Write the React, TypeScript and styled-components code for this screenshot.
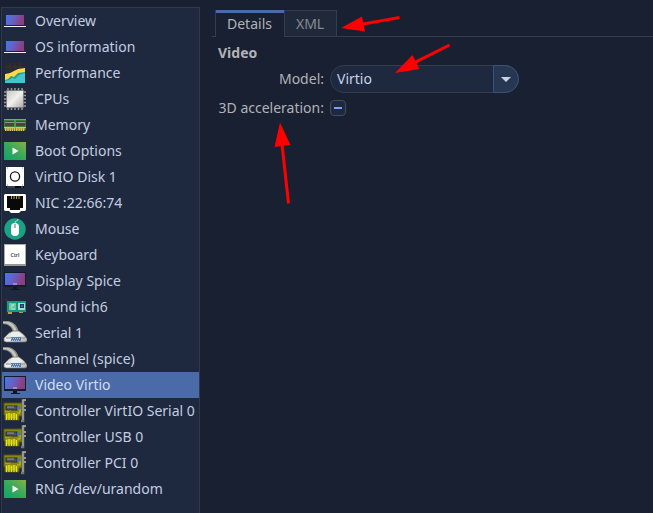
import React, { useEffect, useRef, useState } from "react";
import styled, { createGlobalStyle } from "styled-components";

const GlobalStyle = createGlobalStyle`
  *, *::before, *::after { box-sizing: border-box; }
  body {
    margin: 0;
    background: #182031;
    color: #b1b3b7;
    font-family: "Noto Sans", sans-serif;
    font-size: 14px;
    line-height: 20px;
  }
  button, select { font: inherit; }
`;

const Window = styled.main`
  position: relative;
  display: flex;
  gap: 12px;
  height: 100vh;
  padding: 7px 0 0 1px;
  overflow: hidden;
`;

const Sidebar = styled.nav`
  flex: none;
  width: 199px;
  border: 1px solid #303a4c;
  border-bottom: 0;
  background: #1e283e;
`;

const DeviceList = styled.ul`
  margin: 0;
  padding: 0;
  list-style: none;
`;

const DeviceRow = styled.button<{ $selected: boolean }>`
  display: flex;
  align-items: center;
  gap: 8px;
  width: 100%;
  height: 26px;
  padding: 0 0 0 1px;
  border: 0;
  background: ${(p) => (p.$selected ? "#4a6ba8" : "transparent")};
  color: ${(p) => (p.$selected ? "#d4ddf0" : "#c3cde0")};
  text-align: left;
  white-space: nowrap;
`;

const DeviceIcon = styled.svg`
  flex: none;
  width: 24px;
  height: 24px;
`;

const Details = styled.section`
  flex: 1;
  min-width: 0;
  padding-top: 3px;
`;

const TabBar = styled.div`
  display: flex;
  height: 27px;
  padding-left: 3px;
  box-shadow: inset 0 -1px #353d4c;
`;

const Tab = styled.button<{ $active: boolean }>`
  padding: 0 12px 0 11px;
  border: 1px solid #353d4c;
  border-width: ${(p) => (p.$active ? "0 1px" : "1px 1px 1px 0")};
  background: ${(p) => (p.$active ? "#182031" : "#20293a")};
  box-shadow: ${(p) => (p.$active ? "inset 0 3px #4a6ba8" : "none")};
  color: ${(p) => (p.$active ? "#b1b3b7" : "#858a94")};
`;

const Panel = styled.div`
  padding: 6px;
`;

const Heading = styled.h2`
  margin: 0 0 2px;
  font-size: 14px;
  line-height: 20px;
  font-weight: 700;
`;

const Form = styled.form`
  display: grid;
  grid-template-columns: 106px auto;
  grid-template-rows: 28px 20px;
  justify-content: start;
  align-items: center;
  gap: 5px 6px;
`;

const Label = styled.label`
  text-align: right;
  white-space: nowrap;
`;

const Combo = styled.div`
  position: relative;
  width: 189px;
`;

const Select = styled.select`
  display: block;
  appearance: none;
  width: 100%;
  height: 28px;
  padding: 0 32px 0 6px;
  border: 1px solid #343d4d;
  border-radius: 14px;
  background: #1e283e;
  color: #c8d3e8;
`;

const ComboArrow = styled.span`
  position: absolute;
  top: 0;
  right: 0;
  display: grid;
  place-items: center;
  width: 26px;
  height: 28px;
  border: 1px solid #3b5179;
  border-radius: 0 14px 14px 0;
  background: #273752;
  pointer-events: none;
`;

const Checkbox = styled.input`
  appearance: none;
  display: grid;
  place-items: center;
  width: 16px;
  height: 16px;
  margin: 0;
  border: 1px solid #434c5b;
  border-radius: 4px;
  background: #1e283e;

  &:indeterminate::after {
    content: "";
    width: 8px;
    height: 2px;
    background: #7aa2f7;
  }
  &:checked::after {
    content: "";
    width: 8px;
    height: 8px;
    background: #7aa2f7;
  }
`;

const Annotations = styled.svg`
  position: absolute;
  top: 0;
  left: 0;
  width: 653px;
  height: 513px;
  pointer-events: none;
`;

type IconName =
  | "laptop" | "graph" | "cpu" | "memory" | "play" | "disk" | "nic"
  | "mouse" | "key" | "display" | "sound" | "serial" | "card";

const drawings: Record<IconName, React.ReactNode> = {
  laptop: (
    <>
      <path d="M3 6h18v11H3z" fill="#1b2033" />
      <path d="M3 6h18v10H3z" fill="url(#screen)" />
      <path d="M1 17h22v1H1z" fill="#f4f1ee" />
    </>
  ),
  graph: (
    <>
      <path d="M2 2h20v20H2z" fill="#29292d" />
      <path d="M2 6h20M2 10h20M7 2v12M12 2v12M17 2v12" stroke="#3a3a3f" strokeWidth=".6" />
      <path d="M2 13l5-1 4-2 4-2 7-1v15H2z" fill="#fbd84c" />
      <path d="M2 19l3-1 3-3 3 1 4-4 7-1v11H2z" fill="#26a58c" />
      <path d="M2 20l4-1 3-2 3 1 4-4 6-2v10H2z" fill="#48c4cf" />
    </>
  ),
  cpu: (
    <>
      <path d="M5 1v22M8.5 1v22M12 1v22M15.5 1v22M19 1v22M1 5h22M1 8.5h22M1 12h22M1 15.5h22M1 19h22" stroke="#9c9b97" strokeWidth="1.5" />
      <path d="M3.5 3.5h17v17h-17z" fill="url(#metal)" stroke="#77777a" strokeWidth=".7" />
    </>
  ),
  memory: (
    <>
      <path d="M1 6h22v11H1z" fill="#417b35" />
      <path d="M1 6h22v1H1z" fill="#78a875" />
      <path d="M2 8h9v5H2zM13 8h9v5h-9z" fill="#42483f" />
      <path d="M2 9.5h9M13 9.5h9" stroke="#92968b" />
      <path d="M1 14.5h22" stroke="#b5d36d" />
      <path d="M2 16.5h20" stroke="#e4be50" strokeWidth="3" strokeDasharray="1.6 .6" />
      <path d="M12 7v8" stroke="#47c953" />
    </>
  ),
  play: (
    <>
      <path d="M1 3h22v18H1z" fill="url(#green)" />
      <path d="M9.5 8.5v7l6-3.5z" fill="#fff" />
    </>
  ),
  disk: (
    <>
      <path d="M3 2h18v19H3z" fill="#fff" />
      <path d="M3 21h18v2H3z" fill="#080a0f" />
      <path d="M4 22h8M18 22h2" stroke="#9aa2b0" strokeWidth=".7" />
      <circle cx="12" cy="11.5" r="4.6" fill="none" stroke="#171717" strokeWidth="1.3" />
      <path d="M4 3h1M19 3h1M4 20h1M19 20h1" stroke="#999" />
    </>
  ),
  nic: (
    <>
      <path d="M2 3h20l1 1v15l-1 1h-4l-2 2H8l-2-2H2l-1-1V4z" fill="#fff" />
      <path d="M4 5h16v12h-3v2H7v-2H4z" fill="#090909" />
      <path d="M8.5 5v3M11 5v3M13.5 5v3M16 5v3" stroke="#b89a35" />
    </>
  ),
  mouse: (
    <>
      <circle cx="12" cy="12" r="10.7" fill="#18a383" />
      <path d="M12 6c0-3 3-1 3-4" fill="none" stroke="#d8f1e9" strokeWidth=".8" />
      <rect x="8" y="6" width="8" height="13" rx="4" fill="#fff" />
      <path d="M12 7v4" stroke="#83a99d" strokeWidth="1.5" />
    </>
  ),
  key: (
    <>
      <path d="M1 1h22v22H1z" fill="#aaa" />
      <path d="M2 2h20v19H2z" fill="#fff" />
      <path d="M1 22h22" stroke="#858585" />
      <text x="12" y="14" textAnchor="middle" fill="#555" fontSize="5" fontWeight="700">Ctrl</text>
    </>
  ),
  display: (
    <>
      <path d="M1 3h22v15H1z" fill="#151b2b" />
      <path d="M2 4h20v12H2z" fill="url(#screen)" />
      <path d="M10 15h4" stroke="#cfbce4" />
      <path d="M10 18h4v2h3v1H8v-1h2z" fill="#111622" />
    </>
  ),
  sound: (
    <>
      <path d="M2 4l2 1v15" fill="none" stroke="#30353c" strokeWidth="1.5" />
      <path d="M4 6h19v11H4z" fill="#169983" />
      <path d="M5 17h4v2H5zM16 17h4v1h-4z" fill="#b89c4b" />
      <path d="M6 8h7v7H6z" fill="#66c6a6" />
      <path d="M15 8h7v7h-7z" fill="#a9d9cf" />
      <path d="M7.5 13l4-4M8 10h3M8 14h4" stroke="#b4e4d3" />
      <path d="M17 9h4v4h-4z" fill="#24395e" />
      <path d="M18 11h2" stroke="#7991bd" />
    </>
  ),
  serial: (
    <>
      <path d="M0 0h5c6 1 10 5 11 12l-6-1C9 6 5 3 0 3z" fill="#8d8e8a" />
      <path d="M0 1h5c5 1 8 5 9 10l-3-1C10 5 5 2 0 2z" fill="#c8c8c0" />
      <path d="M1 20v-3l5-5 4-2h6l5 4 3 4v2l-2 1H3z" fill="url(#metal)" stroke="#777873" strokeWidth=".7" />
      <path d="M9 11h7l3 4H7z" fill="#eeeeea" />
      <path d="M3 17h19" stroke="#8b8c89" />
      <path d="M8 16h10v4H8z" fill="#547cac" />
      <path d="M8 17.5h10M9 19.5h8" stroke="#a8caee" strokeDasharray="1 1" />
    </>
  ),
  card: (
    <>
      <path d="M1 4h18v13h-3v4H2v-5H1z" fill="#898711" stroke="#55560c" />
      <path d="M3 14h10v5H3z" fill="#a7a611" />
      <path d="M3.5 15v6M6 14v7M8.5 15v6M11 14v7M13.5 15v6" stroke="#e6e516" strokeWidth="1.3" />
      <path d="M2 12h5l2-2h8v4h-3" fill="none" stroke="#c3c31c" />
      <rect x="3" y="7" width="11" height="4" fill="#4f545c" stroke="#292d32" />
      <path d="M4 8h7" stroke="#929aa6" />
      <path d="M14 9h3" stroke="#3f73bd" strokeWidth="3" />
      <path d="M23 1h-3v21h-2" fill="none" stroke="#737673" strokeWidth="2.6" />
      <path d="M23 1h-3v20" fill="none" stroke="#b4b7af" />
      <path d="M22 6v2M22 10v2" stroke="#b7bab6" strokeWidth="1.5" />
    </>
  ),
};

const devices: { label: string; icon: IconName }[] = [
  { label: "Overview", icon: "laptop" },
  { label: "OS information", icon: "laptop" },
  { label: "Performance", icon: "graph" },
  { label: "CPUs", icon: "cpu" },
  { label: "Memory", icon: "memory" },
  { label: "Boot Options", icon: "play" },
  { label: "VirtIO Disk 1", icon: "disk" },
  { label: "NIC :22:66:74", icon: "nic" },
  { label: "Mouse", icon: "mouse" },
  { label: "Keyboard", icon: "key" },
  { label: "Display Spice", icon: "display" },
  { label: "Sound ich6", icon: "sound" },
  { label: "Serial 1", icon: "serial" },
  { label: "Channel (spice)", icon: "serial" },
  { label: "Video Virtio", icon: "display" },
  { label: "Controller VirtIO Serial 0", icon: "card" },
  { label: "Controller USB 0", icon: "card" },
  { label: "Controller PCI 0", icon: "card" },
  { label: "RNG /dev/urandom", icon: "play" },
];

function Gradients() {
  return (
    <defs>
      <linearGradient id="screen" x2="1" y2="0.25">
        <stop stopColor="#4278ef" />
        <stop offset=".5" stopColor="#6860c0" />
        <stop offset="1" stopColor="#8d3c7e" />
      </linearGradient>
      <linearGradient id="metal" x2="1" y2="1">
        <stop stopColor="#c4c4c2" />
        <stop offset=".5" stopColor="#f0f0ed" />
        <stop offset="1" stopColor="#aaa9a6" />
      </linearGradient>
      <linearGradient id="green" y1="1" x2="1" y2="0">
        <stop stopColor="#0da568" />
        <stop offset=".5" stopColor="#38a95a" />
        <stop offset="1" stopColor="#87af48" />
      </linearGradient>
    </defs>
  );
}

export default function App() {
  const [selected, setSelected] = useState("Video Virtio");
  const [tab, setTab] = useState("Details");
  const acceleration = useRef<HTMLInputElement>(null);

  useEffect(() => {
    if (acceleration.current) acceleration.current.indeterminate = true;
  }, []);

  return (
    <>
      <GlobalStyle />
      <Window>
        <Sidebar aria-label="Hardware">
          <DeviceList>
            {devices.map(({ label, icon }) => (
              <li key={label}>
                <DeviceRow type="button" $selected={label === selected} onClick={() => setSelected(label)}>
                  <DeviceIcon viewBox="0 0 24 24" aria-hidden="true">{drawings[icon]}</DeviceIcon>
                  {label}
                </DeviceRow>
              </li>
            ))}
          </DeviceList>
        </Sidebar>
        <Details>
          <TabBar role="tablist">
            {["Details", "XML"].map((name) => (
              <Tab key={name} type="button" role="tab" aria-selected={tab === name} $active={tab === name} onClick={() => setTab(name)}>
                {name}
              </Tab>
            ))}
          </TabBar>
          <Panel role="tabpanel">
            <Heading>Video</Heading>
            <Form>
              <Label htmlFor="model">Model:</Label>
              <Combo>
                <Select id="model" defaultValue="Virtio">
                  <option>Virtio</option>
                  <option>QXL</option>
                  <option>VGA</option>
                </Select>
                <ComboArrow>
                  <svg width="10" height="5" viewBox="0 0 10 5" aria-hidden="true">
                    <path d="M0 0h10L5 5z" fill="#c8d3e8" />
                  </svg>
                </ComboArrow>
              </Combo>
              <Label htmlFor="acceleration">3D acceleration:</Label>
              <Checkbox ref={acceleration} id="acceleration" type="checkbox" />
            </Form>
          </Panel>
        </Details>
        <Annotations viewBox="0 0 653 513" aria-hidden="true">
          <Gradients />
          <g fill="#f00" stroke="#f00">
            <path d="M341 28L362 16.5 365 31.5z" stroke="none" />
            <path d="M362 24.3L399.5 17.5" strokeWidth="3" />
            <path d="M395 73L412.5 55 419.5 69z" stroke="none" />
            <path d="M414 62.9L449.5 45" strokeWidth="3" />
            <path d="M280 122.5L274.5 147 290.5 145z" stroke="none" />
            <path d="M282 144L288.5 203.5" strokeWidth="3" />
          </g>
        </Annotations>
      </Window>
    </>
  );
}
